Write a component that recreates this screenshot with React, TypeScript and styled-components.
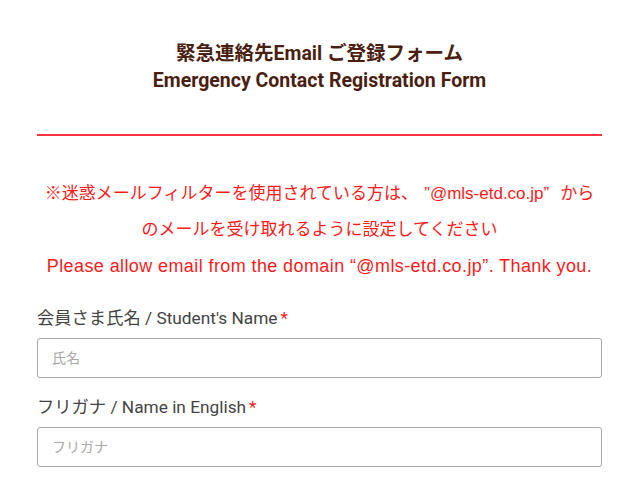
import React from 'react';
import styled, { createGlobalStyle } from 'styled-components';

const GlobalStyle = createGlobalStyle`
  html, body {
    margin: 0;
    padding: 0;
    background: #ffffff;
  }
  body {
    font-family: Roboto, "Noto Sans CJK JP", sans-serif;
  }
`;

const Page = styled.div`
  width: 640px;
  padding: 0 38px 0 37px;
  box-sizing: border-box;
`;

const Header = styled.header`
  padding-top: 40px;
  padding-bottom: 40px;
  border-bottom: 2px solid #fb3340;
  text-align: center;
  color: #4a1f12;
  font-weight: 700;
  font-size: 19.5px;
  line-height: 27px;
`;

const TitleLine = styled.div`
  font-family: Roboto, "Noto Sans CJK JP", sans-serif;
`;

const Notice = styled.div`
  margin-top: 40px;
  text-align: center;
  color: #ff1a1a;
  font-family: "Liberation Sans", "Noto Sans CJK JP", sans-serif;
`;

const NoticeLine = styled.div<{ $en?: boolean }>`
  height: 36px;
  line-height: 36px;
  font-size: ${(p) => (p.$en ? '18px' : '17px')};
  letter-spacing: ${(p) => (p.$en ? '0.4px' : '0')};
  white-space: nowrap;
`;

const Quote = styled.span<{ $open?: boolean }>`
  display: inline-block;
  width: 0.7em;
  text-align: ${(p) => (p.$open ? 'right' : 'left')};
`;

const Field = styled.div`
  margin-top: 22px;
  & + & {
    margin-top: 17px;
  }
`;

const Label = styled.label`
  display: block;
  color: #444444;
  font-size: 17.3px;
  line-height: 24px;
  margin-bottom: 8px;
`;

const Required = styled.span`
  color: #f21c1c;
  margin-left: 3px;
`;

const Input = styled.input`
  display: block;
  width: 100%;
  height: 40px;
  box-sizing: border-box;
  border: 1px solid #a4a8ac;
  border-radius: 3px;
  padding: 0 14px;
  font-family: Roboto, "Noto Sans CJK JP", sans-serif;
  font-size: 14px;
  color: #333;
  outline: none;

  &::placeholder {
    color: #a8a8a8;
  }
`;

const fields = [
  { label: '会員さま氏名 / Student\'s Name', placeholder: '氏名' },
  { label: 'フリガナ / Name in English', placeholder: 'フリガナ' },
];

export default function App() {
  return (
    <Page>
      <GlobalStyle />
      <Header>
        <TitleLine>緊急連絡先Email ご登録フォーム</TitleLine>
        <TitleLine>Emergency Contact Registration Form</TitleLine>
      </Header>
      <Notice>
        <NoticeLine>
          ※迷惑メールフィルターを使用されている方は、<Quote $open>”</Quote>@mls-etd.co.jp<Quote>”</Quote> から
        </NoticeLine>
        <NoticeLine>のメールを受け取れるように設定してください</NoticeLine>
        <NoticeLine $en>Please allow email from the domain “@mls-etd.co.jp”. Thank you.</NoticeLine>
      </Notice>
      {fields.map((f) => (
        <Field key={f.placeholder}>
          <Label>
            {f.label}
            <Required>*</Required>
          </Label>
          <Input placeholder={f.placeholder} />
        </Field>
      ))}
    </Page>
  );
}
